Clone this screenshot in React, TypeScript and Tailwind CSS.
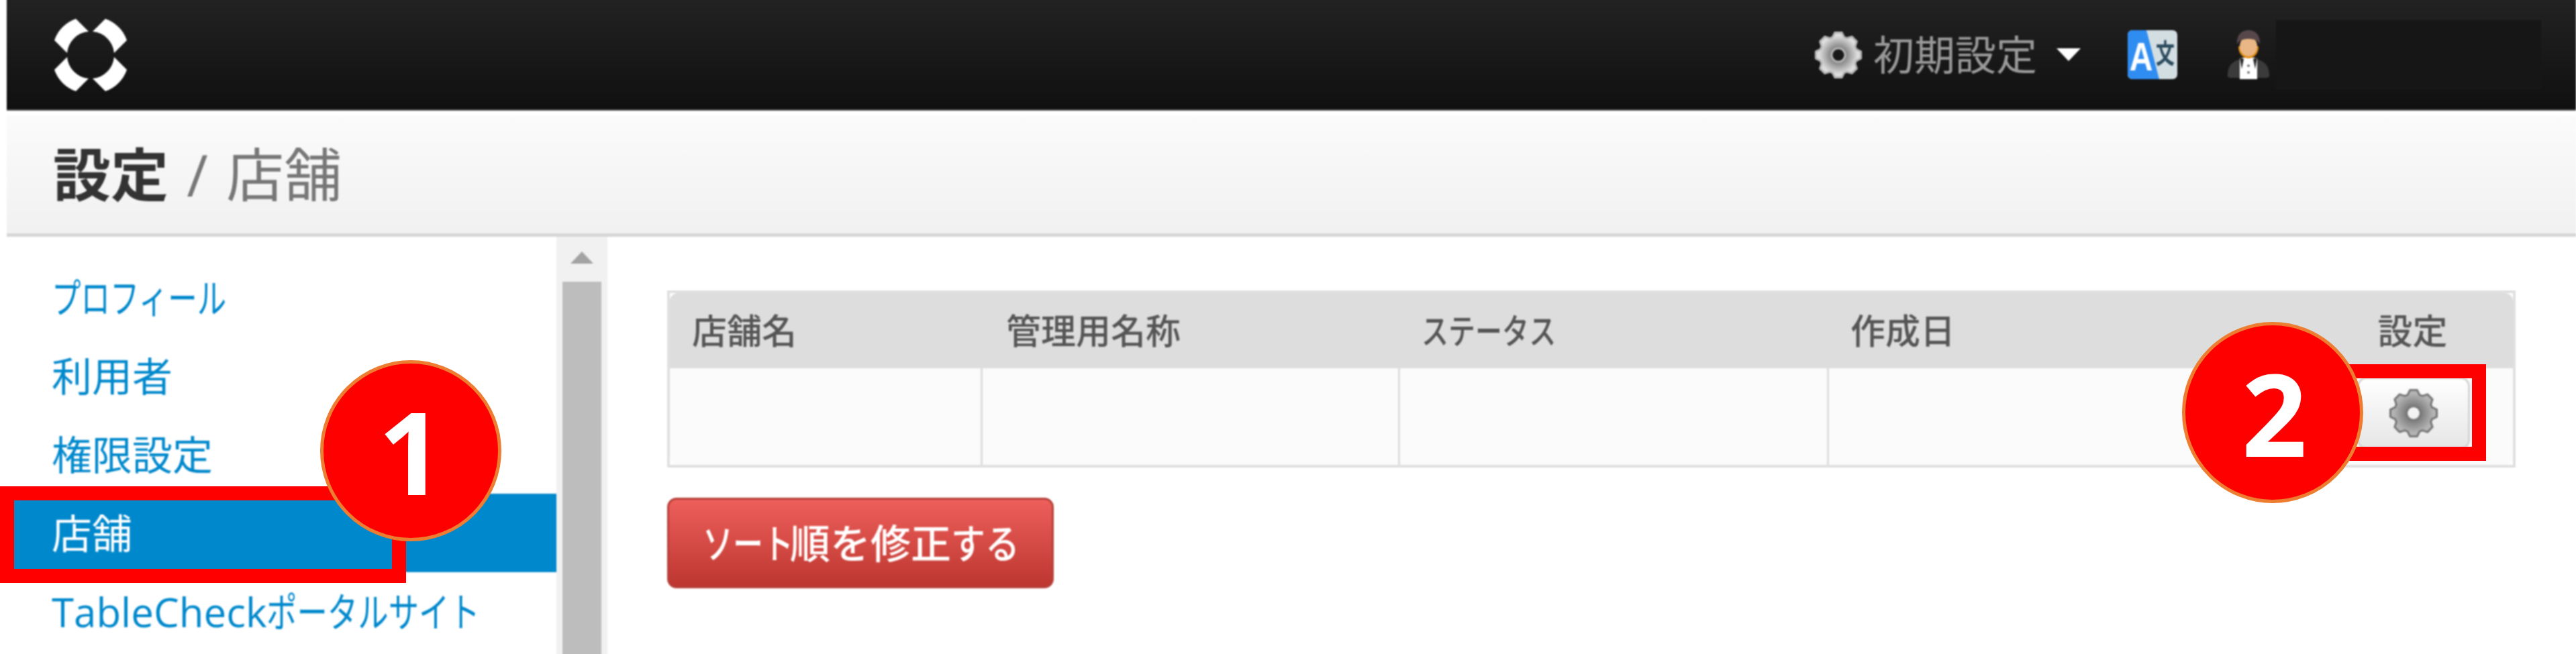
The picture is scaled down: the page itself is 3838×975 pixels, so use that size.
const fontStack = "[font-family:'Open_Sans','Noto_Sans_CJK_JP',sans-serif]";

// 8 tooth gear outline with a round hole, built once at load
function buildGearPath(): string {
  const pts: string[] = [];
  const teeth = 8;
  const step = (Math.PI * 2) / teeth;
  for (let i = 0; i < teeth; i++) {
    const a = i * step - Math.PI / 2;
    const corners: [number, number][] = [
      [-0.5, 28],
      [-0.24, 34],
      [0.24, 34],
      [0.5, 28],
    ];
    for (const [da, r] of corners) {
      const t = a + da * step * 0.8;
      pts.push(`${(36 + r * Math.cos(t)).toFixed(2)} ${(36 + r * Math.sin(t)).toFixed(2)}`);
    }
  }
  const hole = "M36 26 a10 10 0 1 0 0.01 0 Z";
  return `M${pts.join(" L")} Z ${hole}`;
}

const gearPath = buildGearPath();

function Gear({ id, inner, outer, rim, className }: { id: string; inner: string; outer: string; rim: string; className: string }) {
  return (
    <svg viewBox="0 0 72 72" className={className}>
      <defs>
        <radialGradient id={id} cx="0.5" cy="0.5" r="0.5">
          <stop offset="0.3" stopColor={inner} />
          <stop offset="0.85" stopColor={outer} />
        </radialGradient>
      </defs>
      <path d={gearPath} fill={`url(#${id})`} fillRule="evenodd" stroke={rim} strokeWidth="3" strokeLinejoin="round" />
    </svg>
  );
}

function Logo() {
  const seg = "M33 1 A52 52 0 0 0 1 33 L20 52 A35 35 0 0 1 52 20 Z";
  return (
    <svg viewBox="0 0 110 110" className="h-[110px] w-[110px]">
      {[0, 90, 180, 270].map((deg) => (
        <path key={deg} d={seg} fill="#fff" transform={`rotate(${deg} 55 55)`} />
      ))}
    </svg>
  );
}

function TranslateIcon() {
  return (
    <svg viewBox="0 0 74 73" className="ml-[70px] h-[73px] w-[74px] overflow-visible">
      <rect width="74" height="73" rx="7" fill="#d3dee2" />
      <path d="M7 0 H28 L47 73 H7 A7 7 0 0 1 0 66 V7 A7 7 0 0 1 7 0 Z" fill="#2f8df2" />
      <text transform="translate(20 60) scale(0.8 1)" fontSize="60" fontWeight="700" fill="#fff" textAnchor="middle" fontFamily="'Liberation Sans', sans-serif">
        A
      </text>
      <text transform="translate(56 49) scale(0.7 1)" fontSize="40" fontWeight="700" fill="#2b4b5e" textAnchor="middle" fontFamily="'Noto Sans CJK JP', sans-serif">
        文
      </text>
    </svg>
  );
}

function PersonIcon() {
  return (
    <svg viewBox="0 0 64 73" className="ml-[74px] h-[73px] w-[64px]">
      <path d="M1 68 C1 52 8 47 20 43 L44 43 C56 47 63 52 63 68 Q63 71 58 71 H6 Q1 71 1 68 Z" fill="#3b3b3b" />
      <path d="M19 41 H45 V73 H19 Z" fill="#fff" />
      <path d="M19 40 L25 43 L22 58 Z M45 40 L39 43 L42 58 Z" fill="#222" />
      <path d="M17 24 C17 38 27 42 32 42 C37 42 47 38 47 24 Z" fill="#e18c11" />
      <ellipse cx="32" cy="24" rx="13" ry="15" fill="#e9b785" />
      <path d="M15 21 C14 6 23 0 32 0 C41 0 50 6 49 21 C46 15 40 13 32 13 C24 13 18 15 15 21 Z" fill="#57474a" />
      <circle cx="32" cy="53" r="1.8" fill="#555" />
      <circle cx="32" cy="63" r="1.8" fill="#555" />
    </svg>
  );
}

function TopBar() {
  return (
    <header className="ml-[10px] flex h-[171px] items-center justify-between border-b-[2px] border-[#555] bg-gradient-to-b from-[#232323] to-[#101010] pl-[70px] pr-[52px] pt-[6px]">
      <Logo />
      <div className="flex items-center">
        <Gear id="gear-top" inner="#7f7f7f" outer="#dedede" rim="#b5b5b5" className="h-[72px] w-[72px]" />
        <span className="ml-[16px] text-[61px] leading-none text-[#999]">初期設定</span>
        <span className="ml-[29px] h-0 w-0 border-x-[18px] border-t-[19px] border-x-transparent border-t-white" />
        <TranslateIcon />
        <PersonIcon />
        <div className="ml-[9px] h-[103px] w-[395px] bg-[#161616]" />
      </div>
    </header>
  );
}

function Breadcrumb() {
  return (
    <div className="ml-[10px] mt-[7px] flex h-[181px] items-center border-b-[5px] border-[#d6d6d6] bg-gradient-to-b from-[#fbfbfb] to-[#f1f1f1] pl-[69px]">
      <h1 className="text-[86px] leading-none text-[#777] [word-spacing:5px]">
        <b className="font-bold text-[#333]">設定</b> / 店舗
      </h1>
    </div>
  );
}

function Condensed({ width, scale, children }: { width: string; scale: string; children: string }) {
  return <span className={`inline-block origin-left whitespace-nowrap align-top ${width} ${scale}`}>{children}</span>;
}

function Sidebar() {
  const link = "flex h-[117px] items-center pl-[67px] text-[60px] leading-none";
  return (
    <aside className="flex shrink-0">
      <nav className="w-[819px] pt-[32px]">
        <a className={`${link} text-[#0088cc]`}>
          <Condensed width="w-[261px]" scale="scale-x-[0.725]">プロフィール</Condensed>
        </a>
        <a className={`${link} text-[#0088cc]`}>利用者</a>
        <a className={`${link} text-[#0088cc]`}>権限設定</a>
        <a className={`${link} bg-[#0088cc] text-white`}>店舗</a>
        <a className={`${link} text-[#0088cc]`}>
          TableCheck
          <Condensed width="w-[318px]" scale="scale-x-[0.757]">ポータルサイト</Condensed>
        </a>
      </nav>
      <div className="flex w-[76px] flex-col items-center bg-[#f1f1f1]">
        <span className="mt-[22px] h-0 w-0 border-x-[17px] border-b-[18px] border-x-transparent border-b-[#a3a3a3]" />
        <div className="mt-[27px] h-[560px] w-[58px] bg-[#bdbdbd]" />
      </div>
    </aside>
  );
}

function StoreTable() {
  const th = "h-[112px] bg-[#dddddd] text-[52px] font-medium leading-none text-[#555]";
  const td = "h-[144px] border-l-[3px] border-[#dddddd] bg-[#fbfbfb]";
  return (
    <div className="w-[2754px] border-[4px] border-[#e0e0e0]">
      <div className="overflow-hidden rounded-[12px]">
        <table className="w-[2746px] table-fixed border-separate border-spacing-0">
          <colgroup>
            <col className="w-[463px]" />
            <col className="w-[622px]" />
            <col className="w-[639px]" />
            <col className="w-[723px]" />
            <col className="w-[299px]" />
          </colgroup>
          <thead>
            <tr>
              <th className={`${th} pl-[33px] text-left`}>店舗名</th>
              <th className={`${th} pl-[38px] text-left`}>管理用名称</th>
              <th className={`${th} pl-[35px] text-left`}>
                <Condensed width="w-[200px]" scale="scale-x-[0.77]">ステータス</Condensed>
              </th>
              <th className={`${th} pl-[35px] text-left`}>作成日</th>
              <th className={`${th} text-center`}>設定</th>
            </tr>
          </thead>
          <tbody>
            <tr>
              <td className="h-[144px] bg-[#fbfbfb]" />
              <td className={td} />
              <td className={td} />
              <td className={td} />
              <td className={`${td} text-center`}>
                <button className="mb-[10px] inline-flex h-[108px] w-[168px] items-center justify-center rounded-[14px] border-[3px] border-[#d4d4d4] bg-gradient-to-b from-white to-[#e6e6e6] align-middle">
                  <Gear id="gear-row" inner="#7a7a7a" outer="#b4b4b4" rim="#787878" className="h-[74px] w-[74px]" />
                </button>
              </td>
            </tr>
          </tbody>
        </table>
      </div>
    </div>
  );
}

function Callout({ label, className }: { label: string; className: string }) {
  return (
    <div
      className={`absolute flex h-[270px] w-[270px] items-center justify-center rounded-full border-[5px] border-[#ed7d31] bg-[#ff0000] text-[170px] font-bold leading-none text-white [font-family:'Noto_Sans',sans-serif] ${className}`}
    >
      {label}
    </div>
  );
}

export default function App() {
  return (
    <div className={`relative h-[975px] w-[3838px] overflow-hidden bg-white ${fontStack}`}>
      {/* the page under the annotations is an enlarged capture, so it is a little soft */}
      <div className="-mt-[6px] blur-[0.8px]">
        <TopBar />
        <Breadcrumb />
        <div className="ml-[10px] flex">
          <Sidebar />
          <main className="ml-[89px] pt-[80px]">
            <StoreTable />
            <button className="mt-[45px] flex h-[135px] w-[576px] items-center justify-start rounded-[14px] border-[3px] border-[#b5403a] bg-gradient-to-b from-[#ee5f5b] to-[#bd362f] pl-[50px] text-[60px] font-medium leading-none text-white">
              <Condensed width="w-[130px]" scale="scale-x-[0.75]">ソート</Condensed>
              順を修正
              <Condensed width="w-[99px]" scale="scale-x-[0.85]">する</Condensed>
            </button>
          </main>
        </div>
      </div>

      {/* annotations drawn over the screenshot */}
      <div className="absolute left-0 top-[725px] h-[144px] w-[605px] border-[21px] border-[#ff0000]" />
      <div className="absolute left-[3480px] top-[543px] h-[144px] w-[224px] border-[21px] border-[#ff0000]" />
      <Callout label="1" className="left-[477px] top-[537px]" />
      <Callout label="2" className="left-[3251px] top-[480px] pl-[5px]" />
    </div>
  );
}
